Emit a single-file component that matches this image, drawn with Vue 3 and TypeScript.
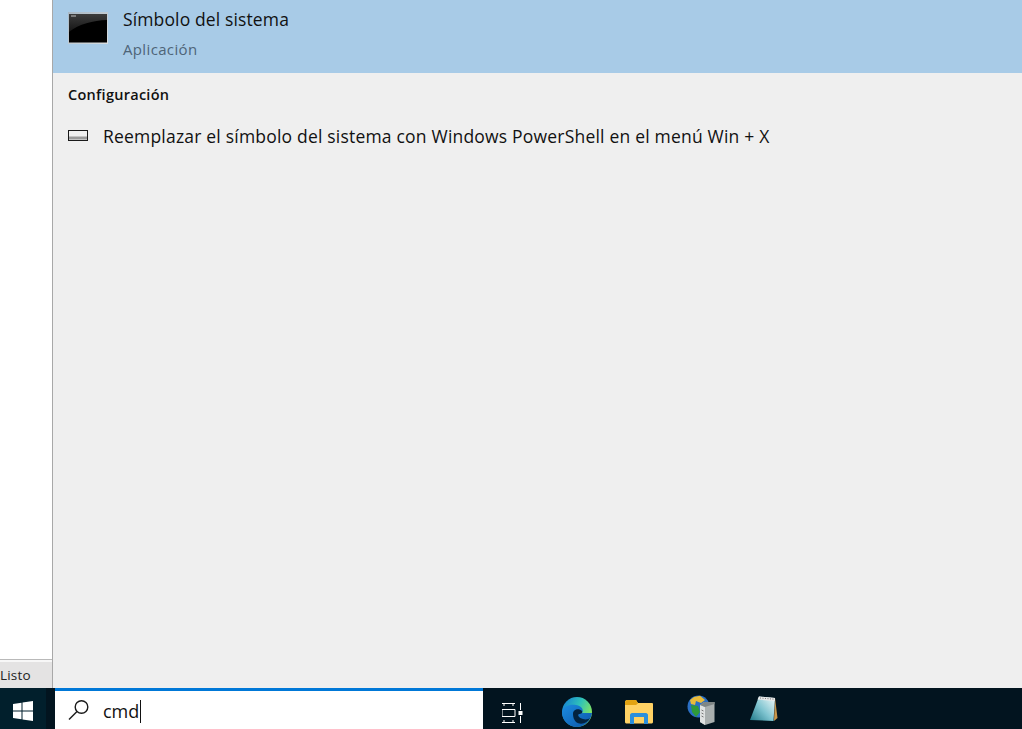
<script setup lang="ts">
const title: string = 'Símbolo del sistema'
</script>

<template>
  <div class="screen">
    <div class="main">
      <aside class="side">
        <div class="side-fill"></div>
        <div class="status">Listo</div>
      </aside>
      <section class="panel">
        <div class="best">
          <svg class="cmd" width="40" height="32" viewBox="0 0 40 32">
            <defs>
              <linearGradient id="fr" x1="0" y1="0" x2="1" y2="1">
                <stop offset="0" stop-color="#a9b8c4" />
                <stop offset="1" stop-color="#d8dde0" />
              </linearGradient>
              <linearGradient id="gl" x1="0" y1="0" x2="0" y2="1">
                <stop offset="0" stop-color="#3c3c3c" />
                <stop offset="1" stop-color="#141414" />
              </linearGradient>
            </defs>
            <rect x="0" y="0" width="40" height="32" fill="url(#fr)" />
            <rect x="1" y="2" width="38" height="28.500" fill="#000" />
            <path d="M1 2H39V8C25 8.500 11 12 1 20Z" fill="url(#gl)" />
            <rect x="3" y="3.500" width="5" height="1" fill="#bdbdbd" />
          </svg>
          <div class="best-text">
            <div class="best-title">{{ title }}</div>
            <div class="best-sub">Aplicación</div>
          </div>
        </div>
        <div class="heading">Configuración</div>
        <div class="setting">
          <svg width="20" height="11" viewBox="0 0 20 11">
            <rect x="0.500" y="0.500" width="19" height="10" fill="#f0f0f0" stroke="#1a1a1a" />
            <rect x="1" y="6.500" width="18" height="3" fill="#9a9a9a" />
          </svg>
          <span>Reemplazar el símbolo del sistema con Windows PowerShell en el menú Win + X</span>
        </div>
      </section>
    </div>
    <footer class="taskbar">
      <div class="start">
        <svg width="20" height="20" viewBox="0 0 20 20" fill="#fff">
          <path d="M0 3 8.500 1.800V9.500H0ZM9.500 1.600 20 0V9.500H9.500ZM0 10.500H8.500V18.200L0 17ZM9.500 10.500H20V20L9.500 18.400Z" />
        </svg>
      </div>
      <div class="search">
        <svg width="22" height="22" viewBox="0 0 22 22" fill="none" stroke="#1a1a1a" stroke-width="1.400">
          <circle cx="13.500" cy="8" r="6.300" />
          <path d="M9 12.500 1 20.500" />
        </svg>
        <span class="query">cmd</span><span class="caret"></span>
      </div>
      <div class="tray">
        <svg class="taskview" width="22" height="20" viewBox="0 0 22 20" fill="none" stroke="#fff">
          <path d="M0 .5H13M0 6.500H13V13.500H0ZM0 19.500H13M2 .5V3M11 .5V3M2 17V19.500M11 17V19.500M18.500 0V7M18.500 13V20" />
          <rect x="16.500" y="8" width="4" height="4" fill="#fff" stroke="none" />
        </svg>
        <svg class="edge" width="30" height="30" viewBox="0 0 30 30">
          <defs>
            <linearGradient id="eg" x1="0.100" y1="0.200" x2="0.950" y2="0.600">
              <stop offset="0" stop-color="#1a8dcf" />
              <stop offset="0.500" stop-color="#30c3b8" />
              <stop offset="1" stop-color="#84e55f" />
            </linearGradient>
            <linearGradient id="eb" x1="0" y1="0" x2="1" y2="1">
              <stop offset="0" stop-color="#1c8ce0" />
              <stop offset="1" stop-color="#0c55a8" />
            </linearGradient>
          </defs>
          <circle cx="15" cy="15" r="15" fill="url(#eg)" />
          <path d="M0 15C1 9 8 7 14 8C20 9 22 13 20 16H30C29 24 22 30 15 30C6 30 0 23 0 15Z" fill="url(#eb)" />
          <path d="M11 17C11 12 17 11 20 14C21 16 19 17 17 17C15 18 17 21 21 22C24 23 27 22 28 21C25 27 18 28 14 25C12 23 11 20 11 17Z" fill="#03233f" />
        </svg>
        <svg class="folder" width="28" height="24" viewBox="0 0 28 24">
          <path d="M0 2C0 1 1 0 2 0H11L13 3H27C27.500 3 28 3.500 28 4V22C28 23 27 23.500 26 23.500H2C1 23.500 0 23 0 22Z" fill="#ffd264" />
          <path d="M0 2C0 1 1 0 2 0H11L13 3.500L11 5H0Z" fill="#e2a312" />
          <path d="M5 24V15C5 14 6 13 7 13H21C22 13 23 14 23 15V24H19V17H9V24Z" fill="#2b8fdc" />
        </svg>
        <svg class="server" width="28" height="30" viewBox="0 0 28 30">
          <circle cx="11.500" cy="11.500" r="11" fill="#2b6fc4" />
          <path d="M3 5 7 2 13 .8 18 5 14 8 9 6 8 10 4 9Z" fill="#e9bb3a" />
          <path d="M4 10 11 11 13 17 9 22 5 17ZM15 9 20 8 22 14 16 14Z" fill="#2f9a3a" />
          <path d="M17 7H27.500V27L18 30 13 27V10Z" fill="#a9afaf" />
          <path d="M13 10 18 12V30L13 27Z" fill="#dfe2e2" />
          <path d="M18 12 27.500 9V7H17L13 10Z" fill="#7f8686" />
          <path d="M14.500 15 16.500 16M14.500 18 16.500 19M14.500 21 16.500 22" stroke="#777" />
        </svg>
        <svg class="note" width="28" height="26" viewBox="0 0 28 26">
          <defs>
            <linearGradient id="ng" x1="0" y1="1" x2="1" y2="0.100">
              <stop offset="0" stop-color="#1f7888" />
              <stop offset="0.500" stop-color="#7fc4d0" />
              <stop offset="1" stop-color="#eaf6f7" />
            </linearGradient>
          </defs>
          <path d="M25 2 27.500 22 24 25Z" fill="#c9964a" />
          <path d="M9 0.500 25 2 23.500 25 0 24Z" fill="url(#ng)" />
          <path d="M9 0.500 25 2 24.800 5 7.500 3.500Z" fill="#e8e8e8" />
          <path d="M10 2 24 3.200" stroke="#777" stroke-dasharray="1 1.500" />
        </svg>
      </div>
    </footer>
  </div>
</template>

<style>
html, body { margin: 0; background: #fff; overflow: hidden; }
</style>

<style scoped>
.screen {
  width: 1022px;
  height: 729px;
  display: flex;
  flex-direction: column;
  overflow: hidden;
  font-family: "Open Sans", "Noto Sans", sans-serif;
  color: #111;
}
.main { flex: 1; display: flex; min-height: 0; }
.side {
  width: 52px;
  border-right: 1px solid #a8a8a8;
  display: flex;
  flex-direction: column;
  background: #fff;
}
.side-fill { flex: 1; }
.status {
  height: 28px;
  border-top: 1px solid #b9b9b9;
  box-shadow: inset 0 2px 0 #f7f7f7;
  background: #e4e3e3;
  font-size: 13.500px;
  line-height: 31px;
  color: #222;
  letter-spacing: 0.200px;
}
.panel { flex: 1; background: #efefef; }
.best {
  height: 73px;
  background: #a8cbe7;
  display: flex;
  padding-left: 15px;
  box-sizing: border-box;
}
.cmd { margin-top: 12px; margin-right: 15px; flex: none; }
.best-text { padding-top: 7px; }
.best-title { font-size: 17.500px; line-height: 25px; letter-spacing: 0.130px; }
.best-sub { font-size: 15px; line-height: 20px; margin-top: 7px; color: #4e6478; letter-spacing: 0.350px; }
.heading {
  font-size: 14.500px;
  font-weight: 600;
  line-height: 20px;
  padding: 12px 0 0 15px;
  letter-spacing: 0.270px;
}
.setting {
  display: flex;
  align-items: center;
  padding-left: 15px;
  margin-top: 19px;
  height: 24px;
  font-size: 17.500px;
  letter-spacing: 0.200px;
  white-space: nowrap;
}
.setting svg { margin-right: 15px; margin-top: -1px; flex: none; }
.taskbar {
  height: 41px;
  flex: none;
  background: #02141f;
  display: flex;
}
.start {
  width: 46px;
  display: flex;
  align-items: center;
  justify-content: center;
  padding-top: 4px;
  box-sizing: border-box;
  background: #011f2c;
}
.search {
  margin-left: 9px;
  width: 428px;
  box-sizing: border-box;
  background: #fff;
  border-top: 3px solid #0078d7;
  display: flex;
  align-items: center;
  padding-left: 13px;
}
.query { margin-left: 13px; font-size: 18px; color: #111; margin-top: 2px; }
.caret { width: 1px; height: 23px; background: #111; margin-left: 1px; margin-top: 2px; }
.tray { display: flex; align-items: center; }
.taskview { margin-left: 19px; margin-top: 9px; }
.edge { margin-left: 38px; margin-top: 7px; }
.folder { margin-left: 33px; margin-top: 7px; }
.server { margin-left: 34px; margin-top: 2px; }
.note { margin-left: 35px; margin-top: 0; }
</style>
